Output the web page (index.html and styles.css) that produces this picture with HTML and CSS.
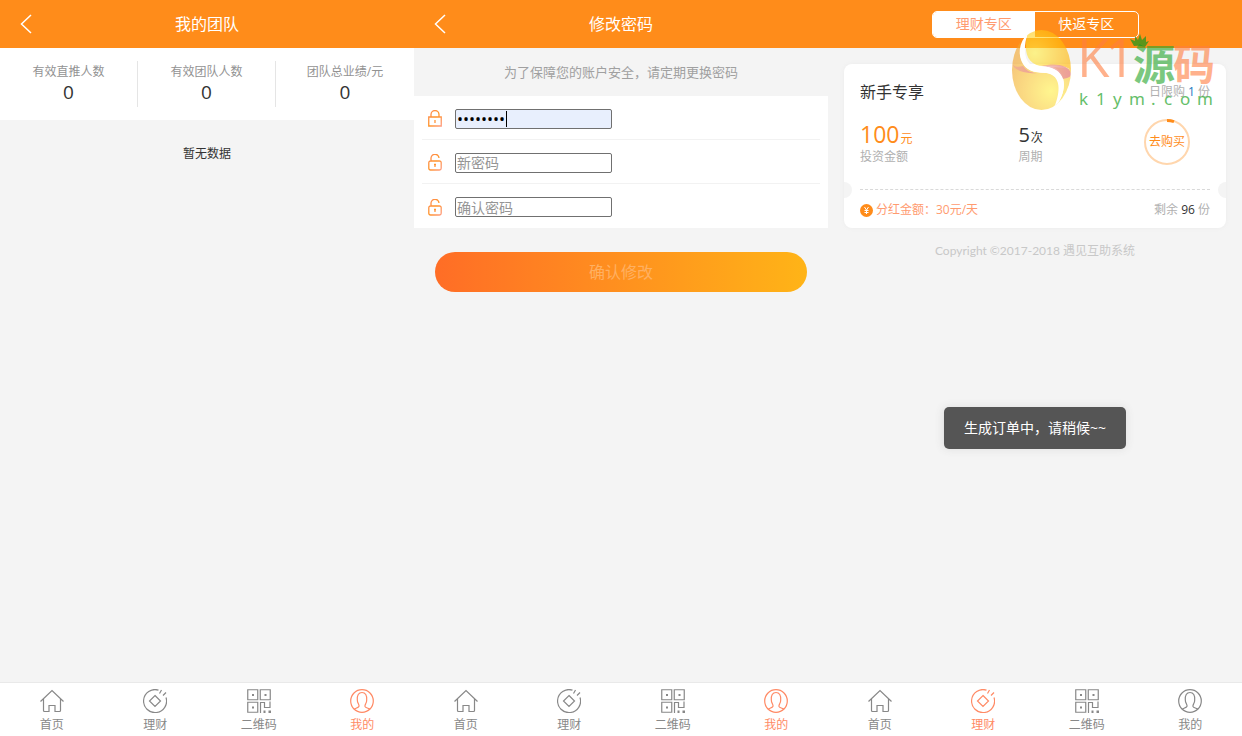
FILE: index.html
```
<!DOCTYPE html>
<html lang="zh-CN">
<head>
<meta charset="utf-8">
<title>遇见互助系统</title>
<link rel="stylesheet" href="styles.css">
</head>
<body>
<svg class="symbols" aria-hidden="true">
  <defs>
    <linearGradient id="lock-tone" x1="0" y1="0" x2="1" y2="1"><stop offset="0" stop-color="#ff8d5c"/><stop offset=".5" stop-color="#ff9326"/><stop offset="1" stop-color="#ff9c80"/></linearGradient>
  </defs>
  <symbol id="back" viewBox="0 0 12 20"><path d="M11 1 1.500 10 11 19" fill="none" stroke="currentColor" stroke-width="1.500"/></symbol>
  <symbol id="home" viewBox="0 0 24 24"><path d="M.5 12.500 12 1.500l11.500 11M3.500 10v11.500q0 1 1 1H9v-6h6v6h4.500q1 0 1-1V10"/></symbol>
  <symbol id="coin" viewBox="0 0 24 24"><path d="M15.500 1.100A11.500 11.500 0 1 0 23 8.500M12 6.500l5.500 5.500-5.500 5.500L6.500 12zM16.500 4.500l2-3.500M20 6.500l3-3"/></symbol>
  <symbol id="qr" viewBox="0 0 24 24"><path d="M.75.75h10v10h-10zM13.250.75h10v10h-10zM.75 13.250h10v10h-10zM13.500 24V13.500h4v5h5.500v-6"/><path class="solid" d="M5 5h2v2H5zM17.500 5h2v2h-2zM5 17.500h2v2H5zM16.500 21.500h2V24h-2zM21.500 21.500H24V24h-2.500z"/></symbol>
  <symbol id="user" viewBox="0 0 24 24"><circle cx="12" cy="12" r="11.300"/><path d="M4 20.300c1-1 4.500-1.500 5-3 .3-1-.2-1.800-.8-3-.7-1-.9-2-.9-3.500C7 6.500 8.500 3.500 12 3.500s5 3 4.700 7.500c0 1.500-.2 2.500-.9 3.500-.6 1.200-1.100 2-.8 3 .5 1.500 4 1.800 5 2.800"/></symbol>
  <symbol id="lock" viewBox="0 0 14 17"><path d="M3 7V4.500a4 4 0 0 1 8 0V7M.75 7h12.500v9H.75zM7 10v3" fill="none" stroke="url(#lock-tone)" stroke-width="1.300"/></symbol>
  <symbol id="unlock" viewBox="0 0 14 17"><path d="M3 7V4.500a4 4 0 0 1 8-.5M2.500 7h9a1.700 1.700 0 0 1 1.700 1.700v5.600a1.700 1.700 0 0 1-1.700 1.700h-9a1.700 1.700 0 0 1-1.700-1.700V8.700A1.700 1.700 0 0 1 2.500 7zM7 10.500V13M6 10.500h2" fill="none" stroke="url(#lock-tone)" stroke-width="1.300"/></symbol>
</svg>
<div class="screens">
  <section class="screen">
    <header class="bar">
      <button class="back" aria-label="返回"><svg><use href="#back"/></svg></button>
      <h1>我的团队</h1>
    </header>
    <main>
      <dl class="stats">
        <div><dt>有效直推人数</dt><dd>0</dd></div>
        <div><dt>有效团队人数</dt><dd>0</dd></div>
        <div><dt>团队总业绩/元</dt><dd>0</dd></div>
      </dl>
      <p class="empty">暂无数据</p>
    </main>
    <nav class="tabs">
      <a href="#"><svg><use href="#home"/></svg>首页</a>
      <a href="#"><svg><use href="#coin"/></svg>理财</a>
      <a href="#"><svg><use href="#qr"/></svg>二维码</a>
      <a href="#" class="active"><svg><use href="#user"/></svg>我的</a>
    </nav>
  </section>

  <section class="screen">
    <header class="bar">
      <button class="back" aria-label="返回"><svg><use href="#back"/></svg></button>
      <h1>修改密码</h1>
    </header>
    <main>
      <p class="tip">为了保障您的账户安全，请定期更换密码</p>
      <form>
        <div class="fields">
          <div class="field"><label for="old"><svg role="img" aria-label="原密码"><use href="#lock"/></svg></label><span class="entry"><input class="filled" id="old" type="password" value="12345678"><i class="caret"></i></span></div>
          <div class="field"><label for="new"><svg role="img" aria-label="新密码"><use href="#unlock"/></svg></label><input id="new" type="password" placeholder="新密码"></div>
          <div class="field"><label for="again"><svg role="img" aria-label="确认密码"><use href="#unlock"/></svg></label><input id="again" type="password" placeholder="确认密码"></div>
        </div>
        <button class="submit" type="button">确认修改</button>
      </form>
    </main>
    <nav class="tabs">
      <a href="#"><svg><use href="#home"/></svg>首页</a>
      <a href="#"><svg><use href="#coin"/></svg>理财</a>
      <a href="#"><svg><use href="#qr"/></svg>二维码</a>
      <a href="#" class="active"><svg><use href="#user"/></svg>我的</a>
    </nav>
  </section>

  <section class="screen">
    <header class="bar">
      <div class="switch"><button class="on">理财专区</button><button>快返专区</button></div>
    </header>
    <main>
      <article class="card">
        <div class="card-head"><h2>新手专享</h2><span class="muted">日限购 <b class="limit">1</b> 份</span></div>
        <div class="card-body">
          <div><p class="amount">100<small>元</small></p><p class="muted">投资金额</p></div>
          <div><p class="period">5<small>次</small></p><p class="muted">周期</p></div>
          <button class="buy"><svg viewBox="0 0 46 46" aria-hidden="true"><circle cx="23" cy="23" r="22" fill="none" stroke="#ffd6ad" stroke-width="2"/><path d="M23 1.500a21.500 21.500 0 0 1 7 1.200" fill="none" stroke="#ff8c1a" stroke-width="3"/></svg><span>去购买</span></button>
        </div>
        <div class="card-foot">
          <span class="bonus"><svg viewBox="0 0 13 13" aria-hidden="true"><circle cx="6.500" cy="6.500" r="6.500" fill="#ff8c1a"/><path d="M4.500 3l2 3 2-3M6.500 6v4M4.500 6.500h4M4.500 8.500h4" stroke="#fff" fill="none"/></svg>分红金额：30元/天</span>
          <span class="muted">剩余 <b>96</b> 份</span>
        </div>
      </article>
      <p class="copyright">Copyright ©2017-2018 遇见互助系统</p>
    </main>
    <div class="toast" role="status">生成订单中，请稍候~~</div>
    <svg class="mark" viewBox="0 0 206 84" role="img" aria-label="K1源码">
      <defs>
        <radialGradient id="gold-a" gradientUnits="userSpaceOnUse" cx="24" cy="24" r="34"><stop offset="0" stop-color="#fff04a"/><stop offset="1" stop-color="#ffb400"/></radialGradient>
        <radialGradient id="gold-b" gradientUnits="userSpaceOnUse" cx="40" cy="62" r="46"><stop offset="0" stop-color="#fff04a"/><stop offset="1" stop-color="#f2a52a"/></radialGradient>
        <linearGradient id="rose" x1="0" x2="1"><stop offset="0" stop-color="#e0605c" stop-opacity=".5"/><stop offset="1" stop-color="#e0605c"/></linearGradient>
        <clipPath id="disc"><ellipse cx="30.500" cy="41" rx="29.500" ry="40"/></clipPath>
      </defs>
      <g clip-path="url(#disc)">
        <g opacity=".62">
          <path fill="url(#gold-b)" d="M0 0H16C9 8 8 20 10 29C13 41 22 44 35 44C50 45 54 62 43 82H0Z"/>
          <path fill="url(#gold-a)" d="M17 0H62V44C59 38 50 35 33 37C18 37 12 26 16 6Z"/>
          <path fill="url(#gold-b)" d="M42 38C57 44 56 64 43 80L62 82V40Z"/>
          <path fill="url(#rose)" d="M1 34C2 37 5 39 12 37C16 42 20 44 26 44C14 45 3 42 1 34Z"/>
          <path fill="url(#rose)" d="M30 37C43 34 58 35 60 45C60 48 57 49 52 50C50 43 42 38 30 37Z"/>
        </g>
        <path fill="#fff" d="M17 4C7 14 7 27 12 35C18 44 27 43 36 44C50 47 50 62 43 79C56 65 56 46 43 40C35 36 27 39 19 35C12 29 13 14 17 4Z"/>
      </g>
      <g class="mark-name">
        <text class="mark-k" x="66" y="48">K</text>
        <text class="mark-k" x="94" y="48">1</text>
        <text class="mark-yuan" x="122" y="51">源</text>
        <text class="mark-ma" x="162" y="51">码</text>
      </g>
      <path fill="#16991c" opacity=".7" d="M123 17l-4-7 5 2 0-5 3 4 2-6 2 6 4-4 0 6 3-1-4 6q-5-2-11-1z"/>
      <g class="mark-url"><text x="68" y="76">k</text><text x="85" y="76">1</text><text x="102" y="76">y</text><text x="118" y="76">m</text><text x="140" y="76">.</text><text x="153" y="76">c</text><text x="169" y="76">o</text><text x="186" y="76">m</text></g>
    </svg>
    <nav class="tabs">
      <a href="#"><svg><use href="#home"/></svg>首页</a>
      <a href="#" class="active"><svg><use href="#coin"/></svg>理财</a>
      <a href="#"><svg><use href="#qr"/></svg>二维码</a>
      <a href="#"><svg><use href="#user"/></svg>我的</a>
    </nav>
  </section>
</div>
</body>
</html>
```
FILE: styles.css
```
* { box-sizing: border-box; margin: 0; padding: 0; }
body {
  background: #f4f4f4;
  color: #333;
  font: 400 12px/16px "Open Sans", "Noto Sans CJK SC", sans-serif;
}
button, input { font: inherit; color: inherit; border: 0; background: none; }
a { color: inherit; text-decoration: none; }
b, small, i { font-weight: inherit; font-style: normal; }
.symbols { position: absolute; width: 0; height: 0; }

.screens { display: grid; grid-template-columns: repeat(3, 1fr); min-height: 100vh; }
.screen { position: relative; display: flex; flex-direction: column; }
.screen main { flex: 1; }

.bar {
  display: grid;
  grid-template-columns: 1fr auto 1fr;
  align-items: center;
  height: 48px;
  background: #ff8c1a;
  color: #fff;
}
.bar h1 { font-size: 16px; line-height: 24px; font-weight: 400; }
.back { width: 32px; height: 24px; margin-left: 10px; }
.back svg { display: block; width: 12px; height: 20px; margin: 0 auto; }

.switch {
  grid-column: 1 / -1;
  display: flex;
  width: 50%;
  margin: 0 auto;
  border: 1px solid #fff;
  border-radius: 5px;
  overflow: hidden;
}
.switch button { flex: 1; height: 25px; font-size: 14px; line-height: 24px; }
.switch .on { background: #fff; color: #ff9b70; }

.stats { display: grid; grid-template-columns: repeat(3, 1fr); padding: 13px 0; background: #fff; text-align: center; }
.stats div { height: 46px; border-right: 1px solid #e5e5e5; }
.stats div:last-child { border-right: 0; }
.stats dt { line-height: 21px; color: #929292; }
.stats dd { font-size: 19px; line-height: 20px; }
.empty { padding: 26px 0; text-align: center; }

.tip { padding: 12px 0; font-size: 13px; line-height: 24px; text-align: center; color: #a0a0a0; }
.fields { padding: 0 8px; background: #fff; }
.field { display: flex; align-items: center; height: 44px; padding: 2px 0 0 6px; border-bottom: 1px solid #f2f2f2; }
.field:last-child { border-bottom: 0; }
.field label { width: 27px; }
.field svg { display: block; width: 14px; height: 17px; }
.field input { display: block; width: 157px; height: 20px; padding: 0 1px; border: 1px solid #707070; border-radius: 2px; font-size: 14px; background: #fff; }
.field input::placeholder { color: #959595; }
.field .filled { background: #e8effd; color: #000; font-size: 16px; }
.entry { position: relative; }
.caret { position: absolute; left: 51px; top: 2px; width: 1px; height: 16px; background: #000; }
.submit {
  display: block;
  width: 90%;
  height: 40px;
  margin: 24px auto 0;
  border-radius: 20px;
  background: linear-gradient(90deg, #ff6d26, #ffb417);
  color: #ffb061;
  font-size: 16px;
}

.card { position: relative; margin: 16px 16px 15px; padding: 16px 16px 0; border-radius: 8px; background: #fff; box-shadow: 0 0 4px #ececec; }
.card::before, .card::after {
  content: "";
  position: absolute;
  top: 118px;
  width: 8px;
  height: 16px;
  background: #f4f4f4;
}
.card::before { left: 0; border-radius: 0 8px 8px 0; }
.card::after { right: 0; border-radius: 8px 0 0 8px; }
.card-head, .card-foot { display: flex; justify-content: space-between; align-items: center; }
.card-head { height: 24px; }
.card-head h2 { font-size: 16px; font-weight: 400; }
.muted { color: #b0b0b0; }
.muted b { color: #333; }
.muted .limit { color: #1a7abf; }
.card-body { display: grid; grid-template-columns: 48% 1fr auto; padding: 15px 20px 24px 0; border-bottom: 1px dashed #d9d9d9; }
.card-body p { white-space: nowrap; }
.card-body .amount, .card-body .period { height: 30px; line-height: 31px; }
.amount { font-size: 23px; color: #ff8c1a; }
.period { font-size: 20px; }
.card-body small { padding-left: 1px; font-size: 12px; line-height: 1; }
.buy { display: grid; place-items: center; width: 46px; height: 46px; color: #ff8c1a; white-space: nowrap; }
.buy > * { grid-area: 1 / 1; }
.buy svg { width: 46px; height: 46px; }
.card-foot { height: 38px; padding-top: 2px; }
.bonus { display: flex; align-items: center; gap: 3px; color: #ff9b70; }
.bonus svg { width: 13px; height: 13px; }
.copyright { font-family: Lato, "Noto Sans CJK SC", sans-serif; text-align: center; color: #c8c8c8; }

.toast {
  position: absolute;
  top: 407px;
  left: 50%;
  transform: translateX(-50%);
  padding: 9px 20px;
  border-radius: 5px;
  background: #555;
  box-shadow: 0 0 8px #ddd;
  color: #fff;
  font-size: 14px;
  line-height: 24px;
  white-space: nowrap;
}

.mark { position: absolute; top: 29px; right: 25px; width: 206px; height: 84px; overflow: visible; pointer-events: none; }
.mark-name { font-family: "Noto Sans CJK SC", sans-serif; opacity: .6; }
.mark-k { font: 400 53px "Open Sans", sans-serif; fill: #ff7e40; }
.mark-yuan { font-size: 42px; font-weight: 700; fill: #24a52b; }
.mark-ma { font-size: 42px; font-weight: 700; fill: #ff7e40; }
.mark-url { font: 400 17px "Noto Sans", sans-serif; fill: #24a52b; opacity: .7; }

.tabs { display: grid; grid-template-columns: repeat(4, 1fr); height: 54px; border-top: 1px solid #e9e9e9; background: #fff; color: #888; }
.tabs a { display: flex; flex-direction: column; align-items: center; gap: 4px; padding-top: 6px; }
.tabs svg { width: 24px; height: 24px; fill: none; stroke: currentColor; stroke-width: 1.2; }
.tabs .active { color: #ff8a65; }
.solid { fill: currentColor; stroke: none; }
```
